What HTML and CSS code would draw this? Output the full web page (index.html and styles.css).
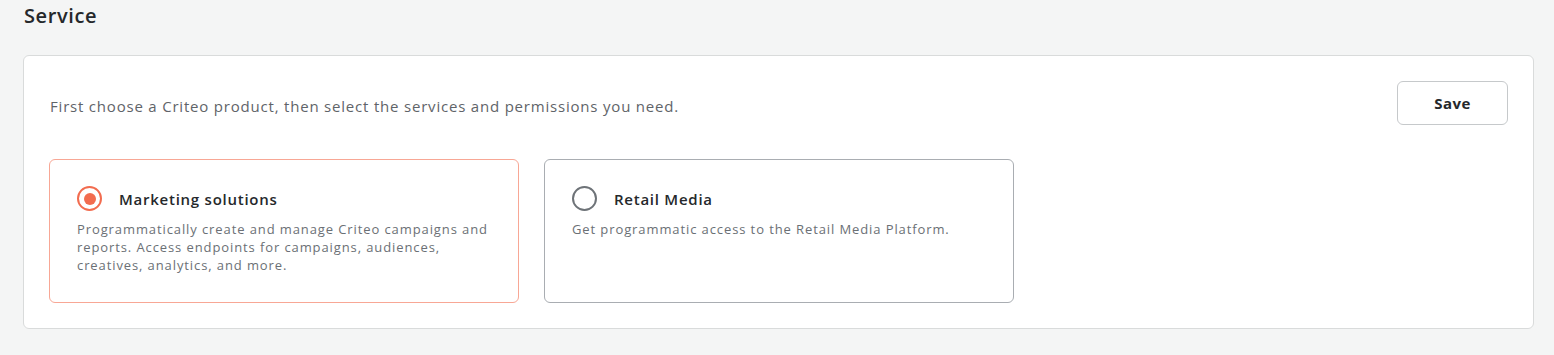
FILE: index.html
```html
<!DOCTYPE html>
<html lang="en">
<head>
    <meta charset="UTF-8">
    <meta name="viewport" content="width=device-width, initial-scale=1.0">
    <title>Service</title>
    <link rel="stylesheet" href="styles.css">
</head>
<body>
    <div class="page">
        <h2 class="section-title">Service</h2>
        <div class="panel">
            <div class="panel-header">
                <p class="panel-intro">First choose a Criteo product, then select the services and permissions you need.</p>
                <button class="btn-save" type="button">Save</button>
            </div>
            <div class="products">
                <label class="product-card selected">
                    <div class="product-head">
                        <span class="radio checked"></span>
                        <span class="product-name">Marketing solutions</span>
                    </div>
                    <p class="product-desc">Programmatically create and manage Criteo campaigns and reports. Access endpoints for campaigns, audiences, creatives, analytics, and more.</p>
                </label>
                <label class="product-card">
                    <div class="product-head">
                        <span class="radio"></span>
                        <span class="product-name">Retail Media</span>
                    </div>
                    <p class="product-desc">Get programmatic access to the Retail Media Platform.</p>
                </label>
            </div>
        </div>
    </div>
</body>
</html>
```

FILE: styles.css
```css
* {
    margin: 0;
    padding: 0;
    box-sizing: border-box;
}

body {
    font-family: "Open Sans", "Noto Sans", sans-serif;
    background: #f4f5f5;
    color: #25282b;
}

.page {
    padding: 3px 20px 0 23px;
}

.section-title {
    font-size: 20px;
    font-weight: 600;
    letter-spacing: 0.6px;
    line-height: 26px;
    color: #25282b;
    padding-left: 1px;
    margin-bottom: 26px;
}

.panel {
    background: #fff;
    border: 1px solid #d9dbdb;
    border-radius: 6px;
    padding: 25px 25px 25px 26px;
}

.panel-header {
    display: flex;
    align-items: center;
    justify-content: space-between;
    height: 44px;
    margin-bottom: 34px;
}

.panel-intro {
    font-size: 15px;
    letter-spacing: 0.8px;
    color: #5f6469;
    padding-top: 6px;
}

.btn-save {
    width: 111px;
    height: 44px;
    background: #fff;
    border: 1px solid #c6c9cb;
    border-radius: 6px;
    font-family: inherit;
    font-size: 15px;
    font-weight: 700;
    letter-spacing: 0.5px;
    color: #25282b;
}

.products {
    display: flex;
    gap: 25px;
    margin-left: -1px;
}

.product-card {
    width: 470px;
    height: 144px;
    border: 1px solid #a9adb2;
    border-radius: 6px;
    padding: 26px 24px 0 27px;
    display: block;
}

.product-card.selected {
    border-color: #f8a795;
}

.product-head {
    display: flex;
    align-items: center;
    gap: 17px;
    margin-bottom: 9px;
}

.radio {
    width: 25px;
    height: 25px;
    border: 2px solid #6e7378;
    border-radius: 50%;
    display: flex;
    align-items: center;
    justify-content: center;
    flex-shrink: 0;
}

.radio.checked {
    border-color: #f26c4f;
}

.radio.checked::after {
    content: "";
    width: 12px;
    height: 12px;
    border-radius: 50%;
    background: #f26c4f;
}

.product-name {
    font-size: 15px;
    font-weight: 600;
    letter-spacing: 0.75px;
    color: #25282b;
}

.product-desc {
    font-size: 13px;
    letter-spacing: 0.9px;
    line-height: 18px;
    color: #6b7075;
}
```
